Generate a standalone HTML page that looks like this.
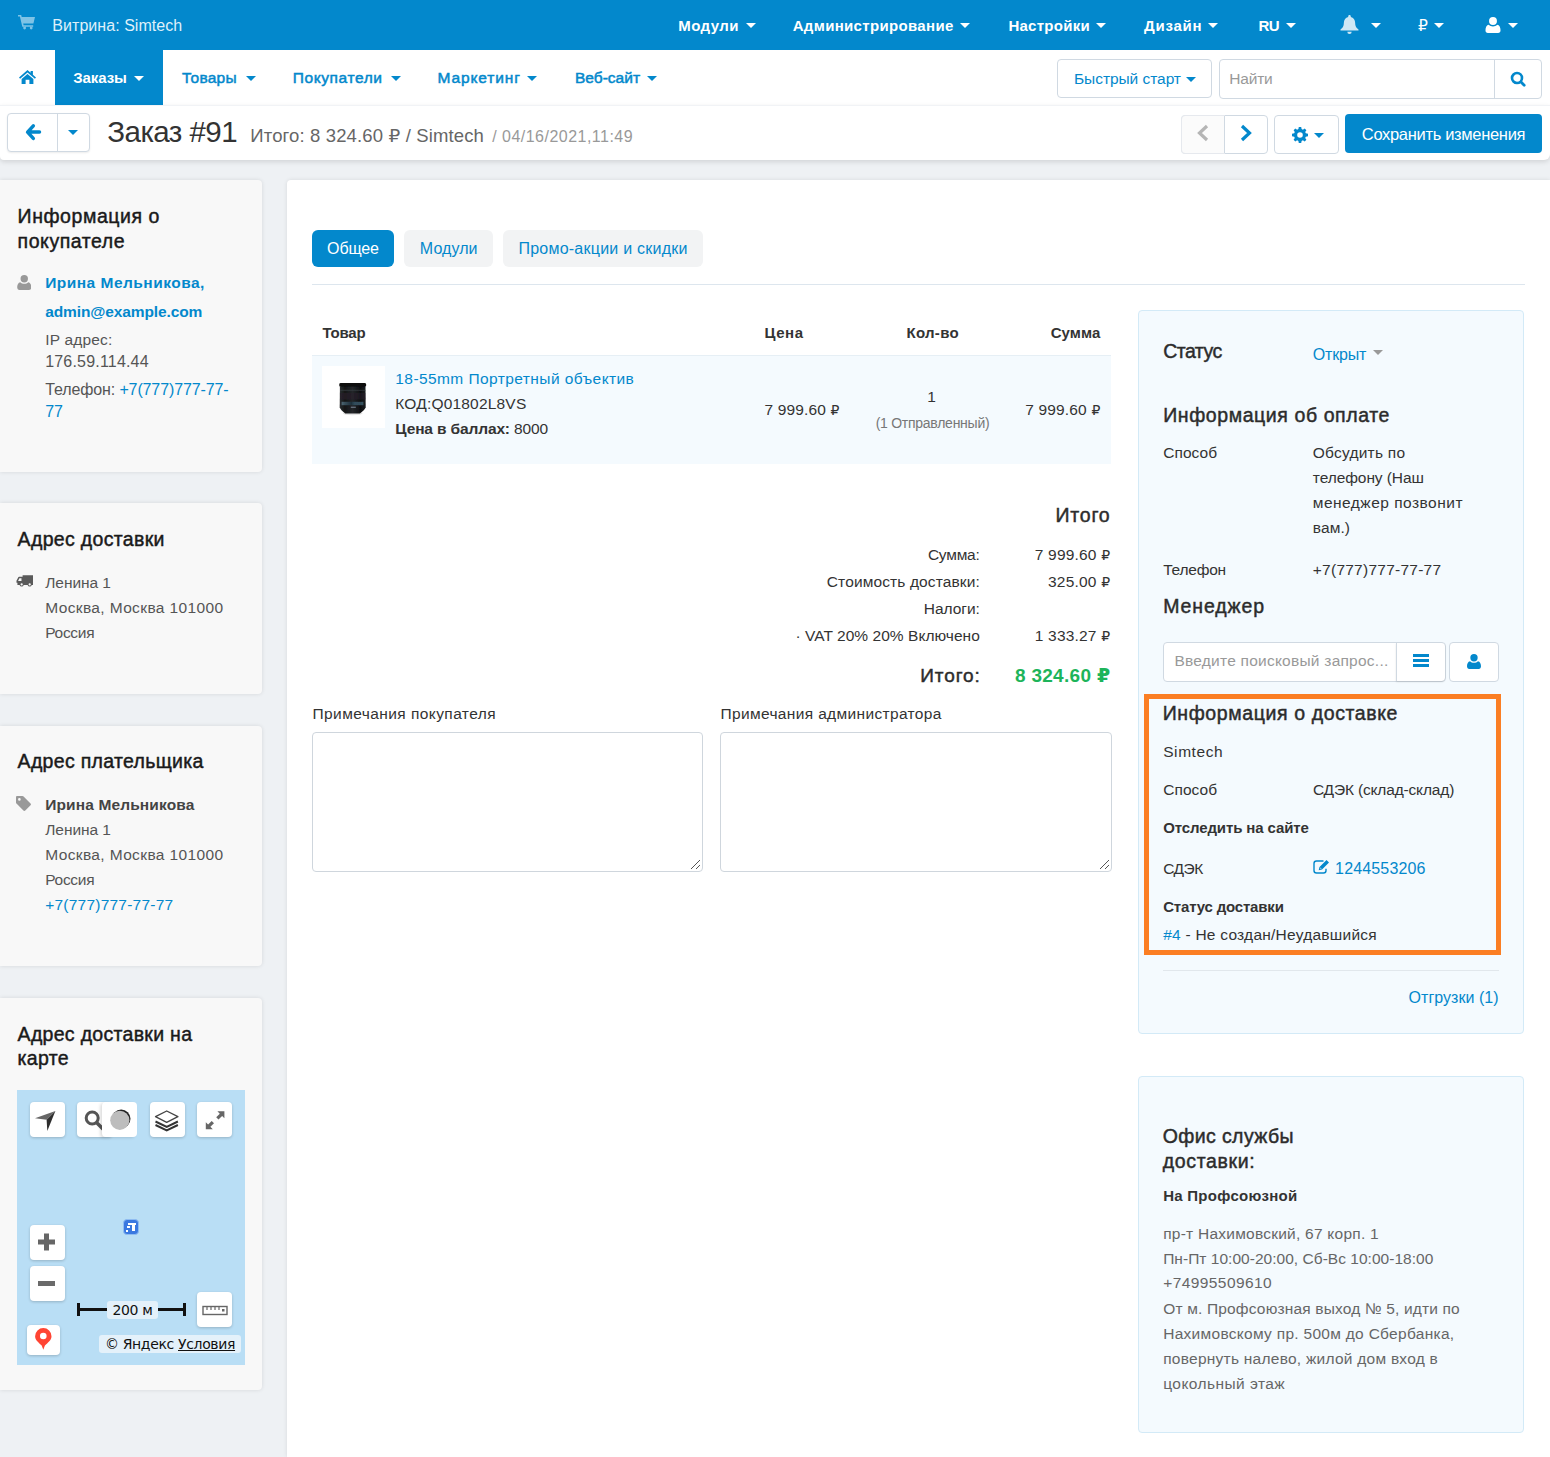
<!DOCTYPE html>
<html lang="ru">
<head>
<meta charset="utf-8">
<title>Заказ #91</title>
<style>
*{box-sizing:border-box;margin:0;padding:0}
html,body{width:1550px;height:1457px;overflow:hidden}
body{background:#eef1f4;font-family:"Liberation Sans","DejaVu Sans",sans-serif;font-size:15px;line-height:20px;color:#333;position:relative}
a{color:#0388cc;text-decoration:none}
.abs{position:absolute}
.t{position:absolute;white-space:nowrap}
svg{display:block;position:absolute}
.car{position:absolute;width:0;height:0;border-left:5px solid transparent;border-right:5px solid transparent;border-top:5px solid #fff}
.car.b{border-top-color:#0388cc}
.btn{position:absolute;border:1px solid #d0d9e2;border-radius:4px;background:#fff}
.card{position:absolute;left:0;width:262px;background:#f8f8f8;border-radius:0 4px 4px 0;box-shadow:0 0 4px rgba(0,0,0,.11)}
.panel{position:absolute;left:1138px;width:386px;background:#f4fafe;border:1px solid #d3eaf7;border-radius:4px}
.rub{font-size:14px}
.ta{position:absolute;background:#fff;border:1px solid #cfd6dd;border-radius:4px}
.mb{position:absolute;width:35px;height:35px;background:#fff;border-radius:4px;box-shadow:0 1px 3px rgba(0,0,0,.2)}
.mb svg{position:static}
</style>
</head>
<body>
<!-- ===== top bar ===== -->
<div class="abs" style="left:0;top:0;width:1550px;height:50px;background:#0388cc"></div>
<svg style="left:18px;top:15px" width="17" height="15" viewBox="0 0 17 15"><path fill="#7fc3e6" d="M0 0h3.200l.5 2H17l-1.600 6.600H5.200l.4 1.600h9.600v1.600H4.300L1.900 1.600H0zM5.200 13a1.400 1.400 0 1 0 2.800 0 1.400 1.400 0 1 0-2.800 0zM11.800 13a1.400 1.400 0 1 0 2.800 0 1.400 1.400 0 1 0-2.800 0z"/></svg>
<i class="car" style="left:745.500px;top:23px"></i>
<i class="car" style="left:960px;top:23px"></i>
<i class="car" style="left:1096px;top:23px"></i>
<i class="car" style="left:1207.500px;top:23px"></i>
<i class="car" style="left:1286px;top:23px"></i>
<i class="car" style="left:1371px;top:23px"></i>
<i class="car" style="left:1434px;top:23px"></i>
<i class="car" style="left:1507.500px;top:23px"></i>
<svg style="left:1340px;top:15px" width="19" height="20" viewBox="0 0 19 20"><path fill="#cfe8f5" d="M9.500 0c.8 0 1.300.6 1.300 1.300v.6c2.700.6 4.300 2.900 4.300 5.700 0 3.800 1.300 5.600 3.400 7v1H.5v-1c2.100-1.400 3.400-3.200 3.400-7 0-2.800 1.600-5.100 4.300-5.700v-.6C8.200.6 8.700 0 9.500 0zM7.300 16.800h4.400a2.200 2.200 0 0 1-4.400 0z"/></svg>
<svg style="left:1485px;top:16.500px" width="16" height="16" viewBox="0 0 16 17"><path fill="#fff" d="M8 0a4.200 4.200 0 0 1 0 8.400A4.200 4.200 0 0 1 8 0zM3.500 8.200c1.200 1.200 2.700 1.800 4.500 1.800s3.300-.6 4.500-1.800C14.800 8.600 16 11 16 14c0 1.800-1 3-2.600 3H2.600C1 17 0 15.800 0 14c0-3 1.200-5.400 3.500-5.800z"/></svg>

<!-- ===== nav ===== -->
<div class="abs" style="left:0;top:50px;width:1550px;height:55px;background:#fff"></div>
<div class="abs" style="left:55px;top:50px;width:108px;height:55px;background:#0388cc"></div>
<svg style="left:19px;top:69.500px" width="17" height="14" viewBox="0 0 17 14"><path fill="#0388cc" d="M8.500 0l3.100 2.700V1h2.300v3.700L17 7.400l-1.100 1.300-7.400-6.300-7.400 6.300L0 7.400zM8.500 3.900l5.900 5V14H10.400V9.800H6.600V14H2.600V8.900z"/></svg>
<i class="car" style="left:134px;top:75.500px"></i>
<i class="car b" style="left:245.500px;top:75.500px"></i>
<i class="car b" style="left:390.500px;top:75.500px"></i>
<i class="car b" style="left:527px;top:75.500px"></i>
<i class="car b" style="left:647px;top:75.500px"></i>
<div class="btn" style="left:1057px;top:59px;width:155px;height:39px"></div>
<i class="car b" style="left:1186px;top:77px"></i>
<div class="btn" style="left:1219px;top:59px;width:323px;height:40px"></div>
<div class="abs" style="left:1494px;top:60px;width:1px;height:38px;background:#d0d9e2"></div>
<svg style="left:1510px;top:71px" width="17" height="17" viewBox="0 0 17 17"><circle cx="7" cy="7" r="5" fill="none" stroke="#0388cc" stroke-width="2.600"/><path d="M11 11l3.200 3.200" stroke="#0388cc" stroke-width="2.800" stroke-linecap="round"/></svg>

<!-- ===== action bar ===== -->
<div class="abs" style="left:0;top:105px;width:1550px;height:55px;background:#fff;box-shadow:0 2px 5px rgba(0,0,0,.12);border-top:1px solid #f1f3f6;border-radius:0 0 6px 4px"></div>
<div class="btn" style="left:7px;top:113px;width:83px;height:39px;box-shadow:0 1px 2px rgba(0,0,0,.08)"></div>
<div class="abs" style="left:57px;top:114px;width:1px;height:37px;background:#d0d9e2"></div>
<svg style="left:24px;top:122px" width="20" height="20" viewBox="0 0 20 20"><path d="M9.300 3.800L3.600 10.100l5.700 6.300M4.200 10.100h11.300" fill="none" stroke="#0388cc" stroke-width="3.500" stroke-linejoin="round" stroke-linecap="round"/></svg>
<i class="car b" style="left:67.500px;top:130px"></i>
<div class="btn" style="left:1181px;top:115px;width:87px;height:39px"></div>
<div class="abs" style="left:1181px;top:115px;width:44px;height:39px;background:#fbfbfb;border:1px solid #e6e9ee;border-radius:4px 0 0 4px"></div>
<div class="abs" style="left:1224px;top:116px;width:1px;height:37px;background:#d0d9e2"></div>
<svg style="left:1196px;top:124px" width="14" height="18" viewBox="0 0 14 18"><path d="M11 2L3.500 9l7.500 7" fill="none" stroke="#b5b5b5" stroke-width="3.200"/></svg>
<svg style="left:1239px;top:124px" width="14" height="18" viewBox="0 0 14 18"><path d="M3 2l7.500 7L3 16" fill="none" stroke="#0388cc" stroke-width="3.200"/></svg>
<div class="btn" style="left:1274px;top:115px;width:65px;height:39px"></div>
<svg style="left:1292px;top:126.500px" width="16" height="16" viewBox="0 0 16 16"><path fill="#0388cc" fill-rule="evenodd" d="M6.800 0h2.400l.4 2.100 1.300.6L12.700 1.500l1.700 1.700-1.200 1.800.6 1.300 2.200.5v2.400l-2.200.5-.6 1.300 1.200 1.800-1.700 1.700-1.800-1.200-1.300.6L9.200 16H6.800l-.4-2.100-1.300-.6-1.800 1.200-1.700-1.700 1.200-1.800-.6-1.300L0 9.200V6.800l2.200-.5.600-1.300L1.600 3.200l1.700-1.700 1.800 1.200 1.300-.6zM8 5.200a2.800 2.800 0 1 0 0 5.600 2.800 2.800 0 0 0 0-5.600z"/></svg>
<i class="car b" style="left:1313.500px;top:133px"></i>
<div class="abs" style="left:1345px;top:114px;width:197px;height:39px;background:#0388cc;border-radius:4px"></div>

<!-- ===== sidebar ===== -->
<div class="card" style="top:180px;height:292px"></div>
<svg style="left:16.500px;top:275px" width="14.500" height="15" viewBox="0 0 16 17"><path fill="#999" d="M8 0a4.200 4.200 0 0 1 0 8.400A4.200 4.200 0 0 1 8 0zM3.500 8.200c1.200 1.200 2.700 1.800 4.500 1.800s3.300-.6 4.500-1.800C14.800 8.600 16 11 16 14c0 1.800-1 3-2.600 3H2.600C1 17 0 15.800 0 14c0-3 1.200-5.400 3.500-5.800z"/></svg>
<div class="card" style="top:503px;height:191px"></div>
<svg style="left:15.500px;top:574.500px" width="17" height="13.500" viewBox="0 0 18 14"><path fill="#5a5a5a" d="M7 0h11v10.500h-1.300a2.300 2.300 0 0 1-4.400 0H8.200a2.300 2.300 0 0 1-4.400 0H1.500V8H.5V6l1.800-3.600c.2-.4.500-.6 1-.6H7zM3.600 3.400L2.200 6.200H5.800V3.400zM6 8.700a1.200 1.200 0 1 0 0 2.400 1.200 1.200 0 0 0 0-2.400zm8.500 0a1.200 1.200 0 1 0 0 2.400 1.200 1.200 0 0 0 0-2.400z"/></svg>
<div class="card" style="top:726px;height:240px"></div>
<svg style="left:16px;top:796px" width="15" height="15" viewBox="0 0 16 16"><path fill="#999" d="M0 1.200C0 .5.500 0 1.200 0h5.600c.5 0 1 .2 1.300.5l7.400 7.400c.6.600.6 1.400 0 2l-5.600 5.600c-.6.600-1.400.6-2 0L.5 8.100C.2 7.800 0 7.300 0 6.800zm3.600 1a1.400 1.400 0 1 0 0 2.800 1.400 1.400 0 0 0 0-2.800z"/></svg>
<div class="card" style="top:998px;height:392px"></div>
<div class="abs" id="map" style="left:17px;top:1090px;width:228px;height:275px;background:#b9def5;overflow:hidden">
    <div class="mb" style="left:13px;top:12px"><svg width="35" height="35" viewBox="0 0 35 35"><path fill="#666" d="M25.400 9L5 16.300l11.600 1.500z"/><path fill="#2e2e2e" d="M25.400 9L16.600 17.800l.7 11.300z"/></svg></div>
    <div class="mb" style="left:60px;top:12px"><svg width="35" height="35" viewBox="0 0 35 35"><circle cx="15.200" cy="16" r="6" fill="none" stroke="#555" stroke-width="3"/><path d="M19.500 20.500l7 7" stroke="#555" stroke-width="3.600"/></svg></div>
    <div class="mb" style="left:85px;top:12px;box-shadow:-2px 1px 3px rgba(0,0,0,.13)"><svg width="35" height="35" viewBox="0 0 35 35"><circle cx="19.200" cy="16.800" r="9.300" fill="#222"/><circle cx="17.800" cy="18.300" r="9.600" fill="#bdbdbd"/></svg></div>
    <div class="mb" style="left:133px;top:12px"><svg width="35" height="35" viewBox="0 0 35 35"><path d="M5.500 19.500l11.200 5.300 11.200-5.300M5.500 23l11.200 5.300L27.900 23" fill="none" stroke="#333" stroke-width="2" stroke-linejoin="miter"/><path d="M16.700 9l11.200 5.700-11.200 5.700L5.500 14.700z" fill="#fff" stroke="#444" stroke-width="1.300" stroke-linejoin="round"/></svg></div>
    <div class="mb" style="left:180px;top:12px"><svg width="35" height="35" viewBox="0 0 35 35"><path fill="#666" d="M27.400 9.300v7l-2.300-2.300-3.600 3.600-2.300-2.300 3.600-3.600-2.400-2.400zM8.800 27.200v-7l2.300 2.300 3.600-3.600 2.300 2.300-3.600 3.600 2.400 2.400z"/></svg></div>
    <div class="mb" style="left:13px;top:135px"><svg width="35" height="35" viewBox="0 0 35 35"><path d="M16.500 8.500v17M8 17h17" stroke="#666" stroke-width="5"/></svg></div>
    <div class="mb" style="left:13px;top:176px"><svg width="35" height="35" viewBox="0 0 35 35"><path d="M8 17.500h17" stroke="#6a6a6a" stroke-width="5"/></svg></div>
    <div class="mb" style="left:180px;top:202px"><svg width="35" height="35" viewBox="0 0 35 35"><rect x="6" y="14.500" width="24" height="8" fill="#fff" stroke="#666" stroke-width="1.400"/><path d="M10 14.500v3.500M14 14.500v3.500M18 14.500v3.500M22 14.500v3.500" stroke="#666" stroke-width="1.200"/><rect x="25" y="17" width="2.500" height="2.500" fill="#666"/></svg></div>
    <div class="mb" style="left:10px;top:235px;width:33px;height:30px"><svg width="33" height="30" viewBox="0 0 33 30"><path fill="#ff4433" d="M16.300 3a8.200 8.200 0 0 1 8.200 8.200c0 4-3.600 6.300-6.600 9.300l-1.600 4.200-1.600-4.200c-3-3-6.600-5.300-6.600-9.300A8.200 8.200 0 0 1 16.300 3z"/><circle cx="16.300" cy="11" r="3.300" fill="#fff"/></svg></div>
    <div class="abs" style="left:106px;top:129px;width:16px;height:16px;background:#3a78e0;border-radius:4px;border:1px solid #8fbcf2"></div>
    <div class="abs" style="left:111px;top:133px;width:8px;height:2px;background:#fff"></div>
    <div class="abs" style="left:115px;top:133px;width:3px;height:8px;background:#fff"></div>
    <div class="abs" style="left:110px;top:136px;width:3px;height:2px;background:#fff"></div>
    <div class="abs" style="left:109px;top:140px;width:2px;height:2px;background:#fff"></div>
    <div class="abs" style="left:61px;top:218px;width:108px;height:3px;background:#111"></div>
    <div class="abs" style="left:60px;top:213px;width:3px;height:13px;background:#111"></div>
    <div class="abs" style="left:166px;top:213px;width:3px;height:13px;background:#111"></div>
    <div class="abs" style="left:90px;top:211px;width:51px;height:18px;background:#e4f1fa;border-radius:3px;font-size:14px;line-height:18px;text-align:center;color:#111;font-family:'DejaVu Sans','Liberation Sans',sans-serif;letter-spacing:-.3px">200 м</div>
    <div class="abs" style="left:82px;top:245px;width:142px;height:18px;background:#e4f1fa;border-radius:3px;font-size:14px;line-height:18px;text-align:center;color:#111;white-space:nowrap;font-family:'DejaVu Sans','Liberation Sans',sans-serif;letter-spacing:-.35px">© Яндекс <u>Условия</u></div>
  </div>

<!-- ===== main ===== -->
<div class="abs" style="left:287px;top:180px;width:1263px;height:1277px;background:#fff;border-radius:4px 0 0 0;box-shadow:0 0 4px rgba(0,0,0,.10)"></div>
<div class="abs" style="left:312px;top:230px;width:82px;height:37px;background:#0388cc;border-radius:6px"></div>
<div class="abs" style="left:404px;top:230px;width:89px;height:37px;background:#f2f3f4;border-radius:6px"></div>
<div class="abs" style="left:503px;top:230px;width:200px;height:37px;background:#f2f3f4;border-radius:6px"></div>
<div class="abs" style="left:312px;top:284px;width:1213px;height:1px;background:#dde6ee"></div>
<div class="abs" style="left:312px;top:355px;width:799px;height:109px;background:#f4fafe;border-top:1px solid #e6eff5"></div>
<div class="abs" style="left:322px;top:366px;width:63px;height:62px;background:#fff"></div>
<svg style="left:337px;top:381px" width="32" height="36" viewBox="0 0 32 36">
  <defs>
    <linearGradient id="lg" x1="0" x2="1"><stop offset="0" stop-color="#2b2e31"/><stop offset=".2" stop-color="#141517"/><stop offset=".5" stop-color="#23262a"/><stop offset=".8" stop-color="#0d0e10"/><stop offset="1" stop-color="#1d1f22"/></linearGradient>
    <linearGradient id="lb" x1="0" x2="1"><stop offset="0" stop-color="#6a93a6"/><stop offset=".45" stop-color="#1d3a4a"/><stop offset=".6" stop-color="#3d6a80"/><stop offset="1" stop-color="#4f7c90"/></linearGradient>
    <filter id="bl" x="-10%" y="-10%" width="120%" height="120%"><feGaussianBlur stdDeviation=".45"/></filter>
  </defs>
  <ellipse cx="15.700" cy="32.600" rx="10" ry="1.600" fill="#e4e4e4" filter="url(#bl)"/>
  <g filter="url(#bl)">
    <rect x="2.300" y="2" width="26.800" height="4" rx="1.400" fill="#0d0e0f"/>
    <path d="M2.900 5.800h25.600l.2 20.500q-1 3-5.800 6.200H8.200Q3.600 29.300 2.700 26.300z" fill="url(#lg)"/>
    <rect x="3" y="8.800" width="25.400" height="1" fill="#3a4044" opacity=".7"/>
    <rect x="3" y="12" width="25.400" height="6.500" fill="#2a1f2c" opacity=".55"/>
    <rect x="4.600" y="20.800" width="21.800" height="3.400" fill="url(#lb)" opacity=".6"/>
    <rect x="13.800" y="25.600" width="5" height="1.400" fill="#9ab" opacity=".55"/>
  </g>
</svg>
<div class="ta" style="left:312px;top:732px;width:391px;height:140px"></div>
<div class="ta" style="left:720px;top:732px;width:392px;height:140px"></div>
<svg style="left:690px;top:859px" width="11" height="11" viewBox="0 0 11 11"><path d="M10 1L1 10M10 6L6 10" stroke="#555" stroke-width="1"/></svg>
<svg style="left:1099px;top:859px" width="11" height="11" viewBox="0 0 11 11"><path d="M10 1L1 10M10 6L6 10" stroke="#555" stroke-width="1"/></svg>

<!-- ===== right panels ===== -->
<div class="panel" style="top:310px;height:724px"></div>
<i class="car" style="left:1372.500px;top:349.500px;border-top-color:#999"></i>
<div class="btn" style="left:1163px;top:642px;width:283px;height:40px"></div>
<div class="abs" style="left:1396px;top:643px;width:49px;height:38px;border-left:1px solid #d0d9e2;border-radius:0 4px 4px 0;box-shadow:0 1px 2px rgba(0,0,0,.12)"></div>
<div class="abs" style="left:1413px;top:654px;width:16px;height:3px;background:#0388cc;box-shadow:0 5px 0 #0388cc,0 10px 0 #0388cc"></div>
<div class="btn" style="left:1449px;top:642px;width:50px;height:40px"></div>
<svg style="left:1467px;top:654px" width="14" height="15" viewBox="0 0 16 17"><path fill="#0388cc" d="M8 0a4.200 4.200 0 0 1 0 8.400A4.200 4.200 0 0 1 8 0zM3.500 8.200c1.200 1.200 2.700 1.800 4.500 1.800s3.300-.6 4.500-1.800C14.800 8.600 16 11 16 14c0 1.800-1 3-2.600 3H2.600C1 17 0 15.800 0 14c0-3 1.200-5.400 3.500-5.800z"/></svg>
<div class="abs" style="left:1144px;top:694px;width:357px;height:261px;border:5px solid #fb7e23"></div>
<svg style="left:1311.500px;top:859px" width="18" height="16" viewBox="0 0 18 16"><path d="M11.500 2H4.500A2.500 2.500 0 0 0 2 4.500v7A2.500 2.500 0 0 0 4.500 14h7a2.500 2.500 0 0 0 2.500-2.500V9.800" fill="none" stroke="#0388cc" stroke-width="1.400"/><path fill="#0388cc" d="M14.500 1l2.500 2.500-7 7-3.300.8.800-3.300zM8.600 8.400l-.4 1.400 1.400-.4z"/></svg>
<div class="abs" style="left:1163px;top:970px;width:336px;height:1px;background:#e1e7ec"></div>
<div class="panel" style="top:1076px;height:357px"></div>

<!-- ===== text ===== -->
<div class="t" id="tb0" style="top:16px;font-size:16px;line-height:20px;left:52.3px;color:#dff0fa;letter-spacing:0.05px;">Витрина: Simtech</div>
<div class="t" id="tb1" style="top:16px;font-size:15px;line-height:20px;left:678.3px;color:#fff;font-weight:bold;letter-spacing:0.41px;">Модули</div>
<div class="t" id="tb2" style="top:16px;font-size:15px;line-height:20px;left:792.7px;color:#fff;font-weight:bold;letter-spacing:0.33px;">Администрирование</div>
<div class="t" id="tb3" style="top:16px;font-size:15px;line-height:20px;left:1008.4px;color:#fff;font-weight:bold;letter-spacing:0.27px;">Настройки</div>
<div class="t" id="tb4" style="top:16px;font-size:15px;line-height:20px;left:1144.1px;color:#fff;font-weight:bold;letter-spacing:0.74px;">Дизайн</div>
<div class="t" id="tb5" style="top:16px;font-size:15px;line-height:20px;left:1258.5px;color:#fff;font-weight:bold;letter-spacing:-0.60px;">RU</div>
<div class="t" id="tb6" style="top:16px;font-size:15.5px;line-height:20px;left:1418.0px;color:#fff;letter-spacing:-0.38px;">₽</div>
<div class="t" id="nv1" style="top:68px;font-size:15px;line-height:20px;left:73.2px;color:#fff;font-weight:bold;letter-spacing:-0.07px;">Заказы</div>
<div class="t" id="nv2" style="top:68px;font-size:15.5px;line-height:20px;left:182.0px;color:#0388cc;letter-spacing:0.25px;-webkit-text-stroke:.5px #0388cc;">Товары</div>
<div class="t" id="nv3" style="top:68px;font-size:15.5px;line-height:20px;left:292.7px;color:#0388cc;letter-spacing:0.60px;-webkit-text-stroke:.5px #0388cc;">Покупатели</div>
<div class="t" id="nv4" style="top:68px;font-size:15.5px;line-height:20px;left:437.5px;color:#0388cc;letter-spacing:0.89px;-webkit-text-stroke:.5px #0388cc;">Маркетинг</div>
<div class="t" id="nv5" style="top:68px;font-size:15.5px;line-height:20px;left:575.0px;color:#0388cc;letter-spacing:0.01px;-webkit-text-stroke:.5px #0388cc;">Веб-сайт</div>
<div class="t" id="qs" style="top:69px;font-size:15.5px;line-height:20px;left:1074.0px;color:#0388cc;letter-spacing:-0.05px;">Быстрый старт</div>
<div class="t" id="find" style="top:69px;font-size:15.5px;line-height:20px;left:1229.2px;color:#999;letter-spacing:-0.16px;">Найти</div>
<div class="t" id="ttl" style="top:112px;font-size:29.5px;line-height:40px;left:107.3px;color:#333;letter-spacing:-0.57px;">Заказ #91</div>
<div class="t" id="sub1" style="top:126px;font-size:18.5px;line-height:20px;left:250.3px;color:#666;letter-spacing:0.14px;">Итого: 8 324.60 ₽ / Simtech</div>
<div class="t" id="sub2" style="top:127px;font-size:16px;line-height:20px;left:492.2px;color:#999;letter-spacing:0.48px;">/ 04/16/2021,11:49</div>
<div class="t" id="save" style="top:124px;font-size:16.5px;line-height:20px;left:1361.8px;color:#fff;letter-spacing:-0.32px;">Сохранить изменения</div>
<div class="t" id="h1a" style="top:206px;font-size:19.5px;line-height:20px;left:17.6px;color:#1a1a1a;letter-spacing:0.56px;-webkit-text-stroke:.45px #1a1a1a;">Информация о</div>
<div class="t" id="h1b" style="top:231px;font-size:19.5px;line-height:20px;left:17.6px;color:#1a1a1a;letter-spacing:0.56px;-webkit-text-stroke:.45px #1a1a1a;">покупателе</div>
<div class="t" id="c1a" style="top:273px;font-size:15.5px;line-height:20px;left:45.2px;color:#0388cc;font-weight:bold;letter-spacing:0.48px;"><a>Ирина Мельникова,</a></div>
<div class="t" id="c1b" style="top:302px;font-size:15.5px;line-height:20px;left:45.2px;color:#0388cc;font-weight:bold;letter-spacing:-0.11px;"><a>admin@example.com</a></div>
<div class="t" id="c1c" style="top:330px;font-size:15.5px;line-height:20px;left:45.2px;color:#555;letter-spacing:0.19px;">IP адрес:</div>
<div class="t" id="c1d" style="top:352px;font-size:16px;line-height:20px;left:45.2px;color:#555;letter-spacing:0.19px;">176.59.114.44</div>
<div class="t" id="c1e" style="top:380px;font-size:16px;line-height:20px;left:45.2px;color:#555;letter-spacing:-0.12px;">Телефон: <a>+7(777)777-77-</a></div>
<div class="t" id="c1f" style="top:402px;font-size:16px;line-height:20px;left:45.2px;color:#555;letter-spacing:-0.12px;"><a>77</a></div>
<div class="t" id="h2" style="top:529px;font-size:19.5px;line-height:20px;left:17.6px;color:#1a1a1a;letter-spacing:0.33px;-webkit-text-stroke:.45px #1a1a1a;">Адрес доставки</div>
<div class="t" id="c2a" style="top:573px;font-size:15.5px;line-height:20px;left:45.2px;color:#555;letter-spacing:-0.05px;">Ленина 1</div>
<div class="t" id="c2b" style="top:598px;font-size:15.5px;line-height:20px;left:45.2px;color:#555;letter-spacing:0.37px;">Москва, Москва 101000</div>
<div class="t" id="c2c" style="top:623px;font-size:15.5px;line-height:20px;left:45.2px;color:#555;letter-spacing:-0.29px;">Россия</div>
<div class="t" id="h3" style="top:751px;font-size:19.5px;line-height:20px;left:17.6px;color:#1a1a1a;letter-spacing:0.31px;-webkit-text-stroke:.45px #1a1a1a;">Адрес плательщика</div>
<div class="t" id="c3a" style="top:795px;font-size:15.5px;line-height:20px;left:45.2px;color:#444;font-weight:bold;letter-spacing:0.13px;">Ирина Мельникова</div>
<div class="t" id="c3b" style="top:820px;font-size:15.5px;line-height:20px;left:45.2px;color:#555;letter-spacing:-0.05px;">Ленина 1</div>
<div class="t" id="c3c" style="top:845px;font-size:15.5px;line-height:20px;left:45.2px;color:#555;letter-spacing:0.37px;">Москва, Москва 101000</div>
<div class="t" id="c3d" style="top:870px;font-size:15.5px;line-height:20px;left:45.2px;color:#555;letter-spacing:-0.29px;">Россия</div>
<div class="t" id="c3e" style="top:895px;font-size:15.5px;line-height:20px;left:45.2px;color:#0388cc;letter-spacing:0.23px;"><a>+7(777)777-77-77</a></div>
<div class="t" id="h4a" style="top:1024px;font-size:19.5px;line-height:20px;left:17.6px;color:#1a1a1a;letter-spacing:0.30px;-webkit-text-stroke:.45px #1a1a1a;">Адрес доставки на</div>
<div class="t" id="h4b" style="top:1048px;font-size:19.5px;line-height:20px;left:17.6px;color:#1a1a1a;letter-spacing:0.30px;-webkit-text-stroke:.45px #1a1a1a;">карте</div>
<div class="t" id="tab1" style="top:239px;font-size:16px;line-height:20px;left:327.1px;color:#fff;letter-spacing:-0.15px;">Общее</div>
<div class="t" id="tab2" style="top:239px;font-size:16px;line-height:20px;left:419.8px;color:#0388cc;letter-spacing:0.08px;"><a>Модули</a></div>
<div class="t" id="tab3" style="top:239px;font-size:16px;line-height:20px;left:518.4px;color:#0388cc;letter-spacing:0.24px;"><a>Промо-акции и скидки</a></div>
<div class="t" id="th1" style="top:323px;font-size:15px;line-height:20px;left:322.5px;color:#333;font-weight:bold;letter-spacing:-0.21px;">Товар</div>
<div class="t" id="th2" style="top:323px;font-size:15px;line-height:20px;left:764.5px;color:#333;font-weight:bold;letter-spacing:0.54px;">Цена</div>
<div class="t" id="th3" style="top:323px;font-size:15px;line-height:20px;left:906.5px;color:#333;font-weight:bold;letter-spacing:0.29px;">Кол-во</div>
<div class="t" id="th4" style="top:323px;font-size:15px;line-height:20px;right:449.7px;color:#333;font-weight:bold;letter-spacing:0.07px;margin-right:-0.07px;">Сумма</div>
<div class="t" id="pname" style="top:369px;font-size:15.5px;line-height:20px;left:395.3px;color:#0388cc;letter-spacing:0.42px;"><a>18-55mm Портретный объектив</a></div>
<div class="t" id="pcode" style="top:394px;font-size:15.5px;line-height:20px;left:395.3px;color:#333;letter-spacing:0.19px;">КОД:Q01802L8VS</div>
<div class="t" id="ppts" style="top:419px;font-size:15.5px;line-height:20px;left:395.3px;color:#333;letter-spacing:-0.14px;"><b>Цена в баллах:</b> 8000</div>
<div class="t" id="price1" style="top:400px;font-size:15.5px;line-height:20px;left:764.5px;color:#333;letter-spacing:0.15px;">7 999.60 <span class="rub">₽</span></div>
<div class="t" id="qty" style="top:387px;font-size:15.5px;line-height:20px;left:931.7px;transform:translateX(-50%);color:#333;letter-spacing:0.15px;">1</div>
<div class="t" id="sent" style="top:413px;font-size:14px;line-height:20px;left:932.5px;transform:translateX(-50%);color:#777;letter-spacing:-0.26px;">(1 Отправленный)</div>
<div class="t" id="price2" style="top:400px;font-size:15.5px;line-height:20px;right:449.7px;color:#333;letter-spacing:0.17px;margin-right:-0.17px;">7 999.60 <span class="rub">₽</span></div>
<div class="t" id="tot_h" style="top:505px;font-size:19.5px;line-height:20px;right:440.3px;color:#2c2c2c;letter-spacing:0.77px;margin-right:-0.77px;-webkit-text-stroke:.45px #2c2c2c;">Итого</div>
<div class="t" id="t1l" style="top:545px;font-size:15.5px;line-height:20px;right:570.2px;color:#333;letter-spacing:-0.22px;margin-right:0.22px;">Сумма:</div>
<div class="t" id="t1v" style="top:545px;font-size:15.5px;line-height:20px;right:439.9px;color:#333;letter-spacing:0.20px;margin-right:-0.20px;">7 999.60 <span class="rub">₽</span></div>
<div class="t" id="t2l" style="top:572px;font-size:15.5px;line-height:20px;right:570.2px;color:#333;letter-spacing:0.12px;margin-right:-0.12px;">Стоимость доставки:</div>
<div class="t" id="t2v" style="top:572px;font-size:15.5px;line-height:20px;right:439.9px;color:#333;letter-spacing:0.21px;margin-right:-0.21px;">325.00 <span class="rub">₽</span></div>
<div class="t" id="t3l" style="top:599px;font-size:15.5px;line-height:20px;right:570.2px;color:#333;letter-spacing:-0.05px;margin-right:0.05px;">Налоги:</div>
<div class="t" id="t4l" style="top:626px;font-size:15.5px;line-height:20px;right:570.2px;color:#333;letter-spacing:0.04px;margin-right:-0.04px;">· VAT 20% 20% Включено</div>
<div class="t" id="t4v" style="top:626px;font-size:15.5px;line-height:20px;right:439.9px;color:#333;letter-spacing:0.20px;margin-right:-0.20px;">1 333.27 <span class="rub">₽</span></div>
<div class="t" id="tot_l" style="top:666px;font-size:19px;line-height:20px;right:570.2px;color:#2c2c2c;letter-spacing:0.90px;margin-right:-0.90px;-webkit-text-stroke:.45px #2c2c2c;">Итого:</div>
<div class="t" id="tot_v" style="top:666px;font-size:19px;line-height:20px;right:439.9px;color:#1db45a;font-weight:bold;letter-spacing:0.30px;margin-right:-0.30px;">8 324.60 ₽</div>
<div class="t" id="n1" style="top:704px;font-size:15.5px;line-height:20px;left:312.5px;color:#333;letter-spacing:0.42px;">Примечания покупателя</div>
<div class="t" id="n2" style="top:704px;font-size:15.5px;line-height:20px;left:720.5px;color:#333;letter-spacing:0.35px;">Примечания администратора</div>
<div class="t" id="rp1" style="top:341px;font-size:19.5px;line-height:20px;left:1163.2px;color:#2c2c2c;letter-spacing:-0.51px;-webkit-text-stroke:.45px #2c2c2c;">Статус</div>
<div class="t" id="st" style="top:345px;font-size:16px;line-height:20px;left:1312.8px;color:#0388cc;letter-spacing:-0.20px;"><a>Открыт</a></div>
<div class="t" id="rp2" style="top:405px;font-size:19.5px;line-height:20px;left:1163.2px;color:#2c2c2c;letter-spacing:0.59px;-webkit-text-stroke:.45px #2c2c2c;">Информация об оплате</div>
<div class="t" id="rp3" style="top:443px;font-size:15.5px;line-height:20px;left:1163.2px;color:#333;letter-spacing:0.07px;">Способ</div>
<div class="t" id="pay1" style="top:443px;font-size:15.5px;line-height:20px;left:1312.8px;color:#333;letter-spacing:0.23px;">Обсудить по</div>
<div class="t" id="pay2" style="top:468px;font-size:15.5px;line-height:20px;left:1312.8px;color:#333;letter-spacing:-0.08px;">телефону (Наш</div>
<div class="t" id="pay3" style="top:493px;font-size:15.5px;line-height:20px;left:1312.8px;color:#333;letter-spacing:0.48px;">менеджер позвонит</div>
<div class="t" id="pay4" style="top:518px;font-size:15.5px;line-height:20px;left:1312.8px;color:#333;letter-spacing:0.10px;">вам.)</div>
<div class="t" id="rp4" style="top:560px;font-size:15.5px;line-height:20px;left:1163.2px;color:#333;letter-spacing:-0.22px;">Телефон</div>
<div class="t" id="ph" style="top:560px;font-size:15.5px;line-height:20px;left:1312.8px;color:#333;letter-spacing:0.25px;">+7(777)777-77-77</div>
<div class="t" id="rp5" style="top:596px;font-size:19.5px;line-height:20px;left:1163.2px;color:#2c2c2c;letter-spacing:0.90px;-webkit-text-stroke:.45px #2c2c2c;">Менеджер</div>
<div class="t" id="mgr" style="top:651px;font-size:15.5px;line-height:20px;left:1174.4px;color:#999;letter-spacing:0.24px;">Введите поисковый запрос...</div>
<div class="t" id="rp6" style="top:703px;font-size:19.5px;line-height:20px;left:1162.7px;color:#2c2c2c;letter-spacing:0.61px;-webkit-text-stroke:.45px #2c2c2c;">Информация о доставке</div>
<div class="t" id="rp7" style="top:742px;font-size:15.5px;line-height:20px;left:1163.2px;color:#333;letter-spacing:0.58px;">Simtech</div>
<div class="t" id="rp8" style="top:780px;font-size:15.5px;line-height:20px;left:1163.2px;color:#333;letter-spacing:0.07px;">Способ</div>
<div class="t" id="sdek1" style="top:780px;font-size:15.5px;line-height:20px;left:1312.9px;color:#333;letter-spacing:-0.16px;">СДЭК (склад-склад)</div>
<div class="t" id="rp9" style="top:818px;font-size:15px;line-height:20px;left:1163.2px;color:#333;font-weight:bold;letter-spacing:-0.12px;">Отследить на сайте</div>
<div class="t" id="rp10" style="top:859px;font-size:15.5px;line-height:20px;left:1163.2px;color:#333;letter-spacing:-0.51px;">СДЭК</div>
<div class="t" id="trk" style="top:859px;font-size:16px;line-height:20px;left:1335.1px;color:#0388cc;letter-spacing:0.15px;"><a>1244553206</a></div>
<div class="t" id="rp11" style="top:897px;font-size:15px;line-height:20px;left:1163.2px;color:#333;font-weight:bold;letter-spacing:-0.18px;">Статус доставки</div>
<div class="t" id="sdst" style="top:925px;font-size:15.5px;line-height:20px;left:1163.2px;color:#333;letter-spacing:0.24px;"><a>#4</a> - Не создан/Неудавшийся</div>
<div class="t" id="shp" style="top:988px;font-size:16px;line-height:20px;right:51.4px;color:#0388cc;letter-spacing:0.04px;margin-right:-0.04px;"><a>Отгрузки (1)</a></div>
<div class="t" id="of1" style="top:1126px;font-size:19.5px;line-height:20px;left:1162.7px;color:#2c2c2c;letter-spacing:0.40px;-webkit-text-stroke:.45px #2c2c2c;">Офис службы</div>
<div class="t" id="of2" style="top:1151px;font-size:19.5px;line-height:20px;left:1162.7px;color:#2c2c2c;letter-spacing:0.67px;-webkit-text-stroke:.45px #2c2c2c;">доставки:</div>
<div class="t" id="of3" style="top:1186px;font-size:15px;line-height:20px;left:1163.2px;color:#333;font-weight:bold;letter-spacing:0.25px;">На Профсоюзной</div>
<div class="t" id="of4" style="top:1224px;font-size:15.5px;line-height:20px;left:1163.2px;color:#666;letter-spacing:0.24px;">пр-т Нахимовский, 67 корп. 1</div>
<div class="t" id="of5" style="top:1249px;font-size:15.5px;line-height:20px;left:1163.2px;color:#666;letter-spacing:0.03px;">Пн-Пт 10:00-20:00, Сб-Вс 10:00-18:00</div>
<div class="t" id="of6" style="top:1273px;font-size:15.5px;line-height:20px;left:1163.2px;color:#666;letter-spacing:0.42px;">+74995509610</div>
<div class="t" id="of7" style="top:1299px;font-size:15.5px;line-height:20px;left:1163.2px;color:#666;letter-spacing:0.17px;">От м. Профсоюзная выход № 5, идти по</div>
<div class="t" id="of8" style="top:1324px;font-size:15.5px;line-height:20px;left:1163.2px;color:#666;letter-spacing:0.29px;">Нахимовскому пр. 500м до Сбербанка,</div>
<div class="t" id="of9" style="top:1349px;font-size:15.5px;line-height:20px;left:1163.2px;color:#666;letter-spacing:0.25px;">повернуть налево, жилой дом вход в</div>
<div class="t" id="of10" style="top:1374px;font-size:15.5px;line-height:20px;left:1163.2px;color:#666;letter-spacing:0.44px;">цокольный этаж</div>
</body>
</html>
